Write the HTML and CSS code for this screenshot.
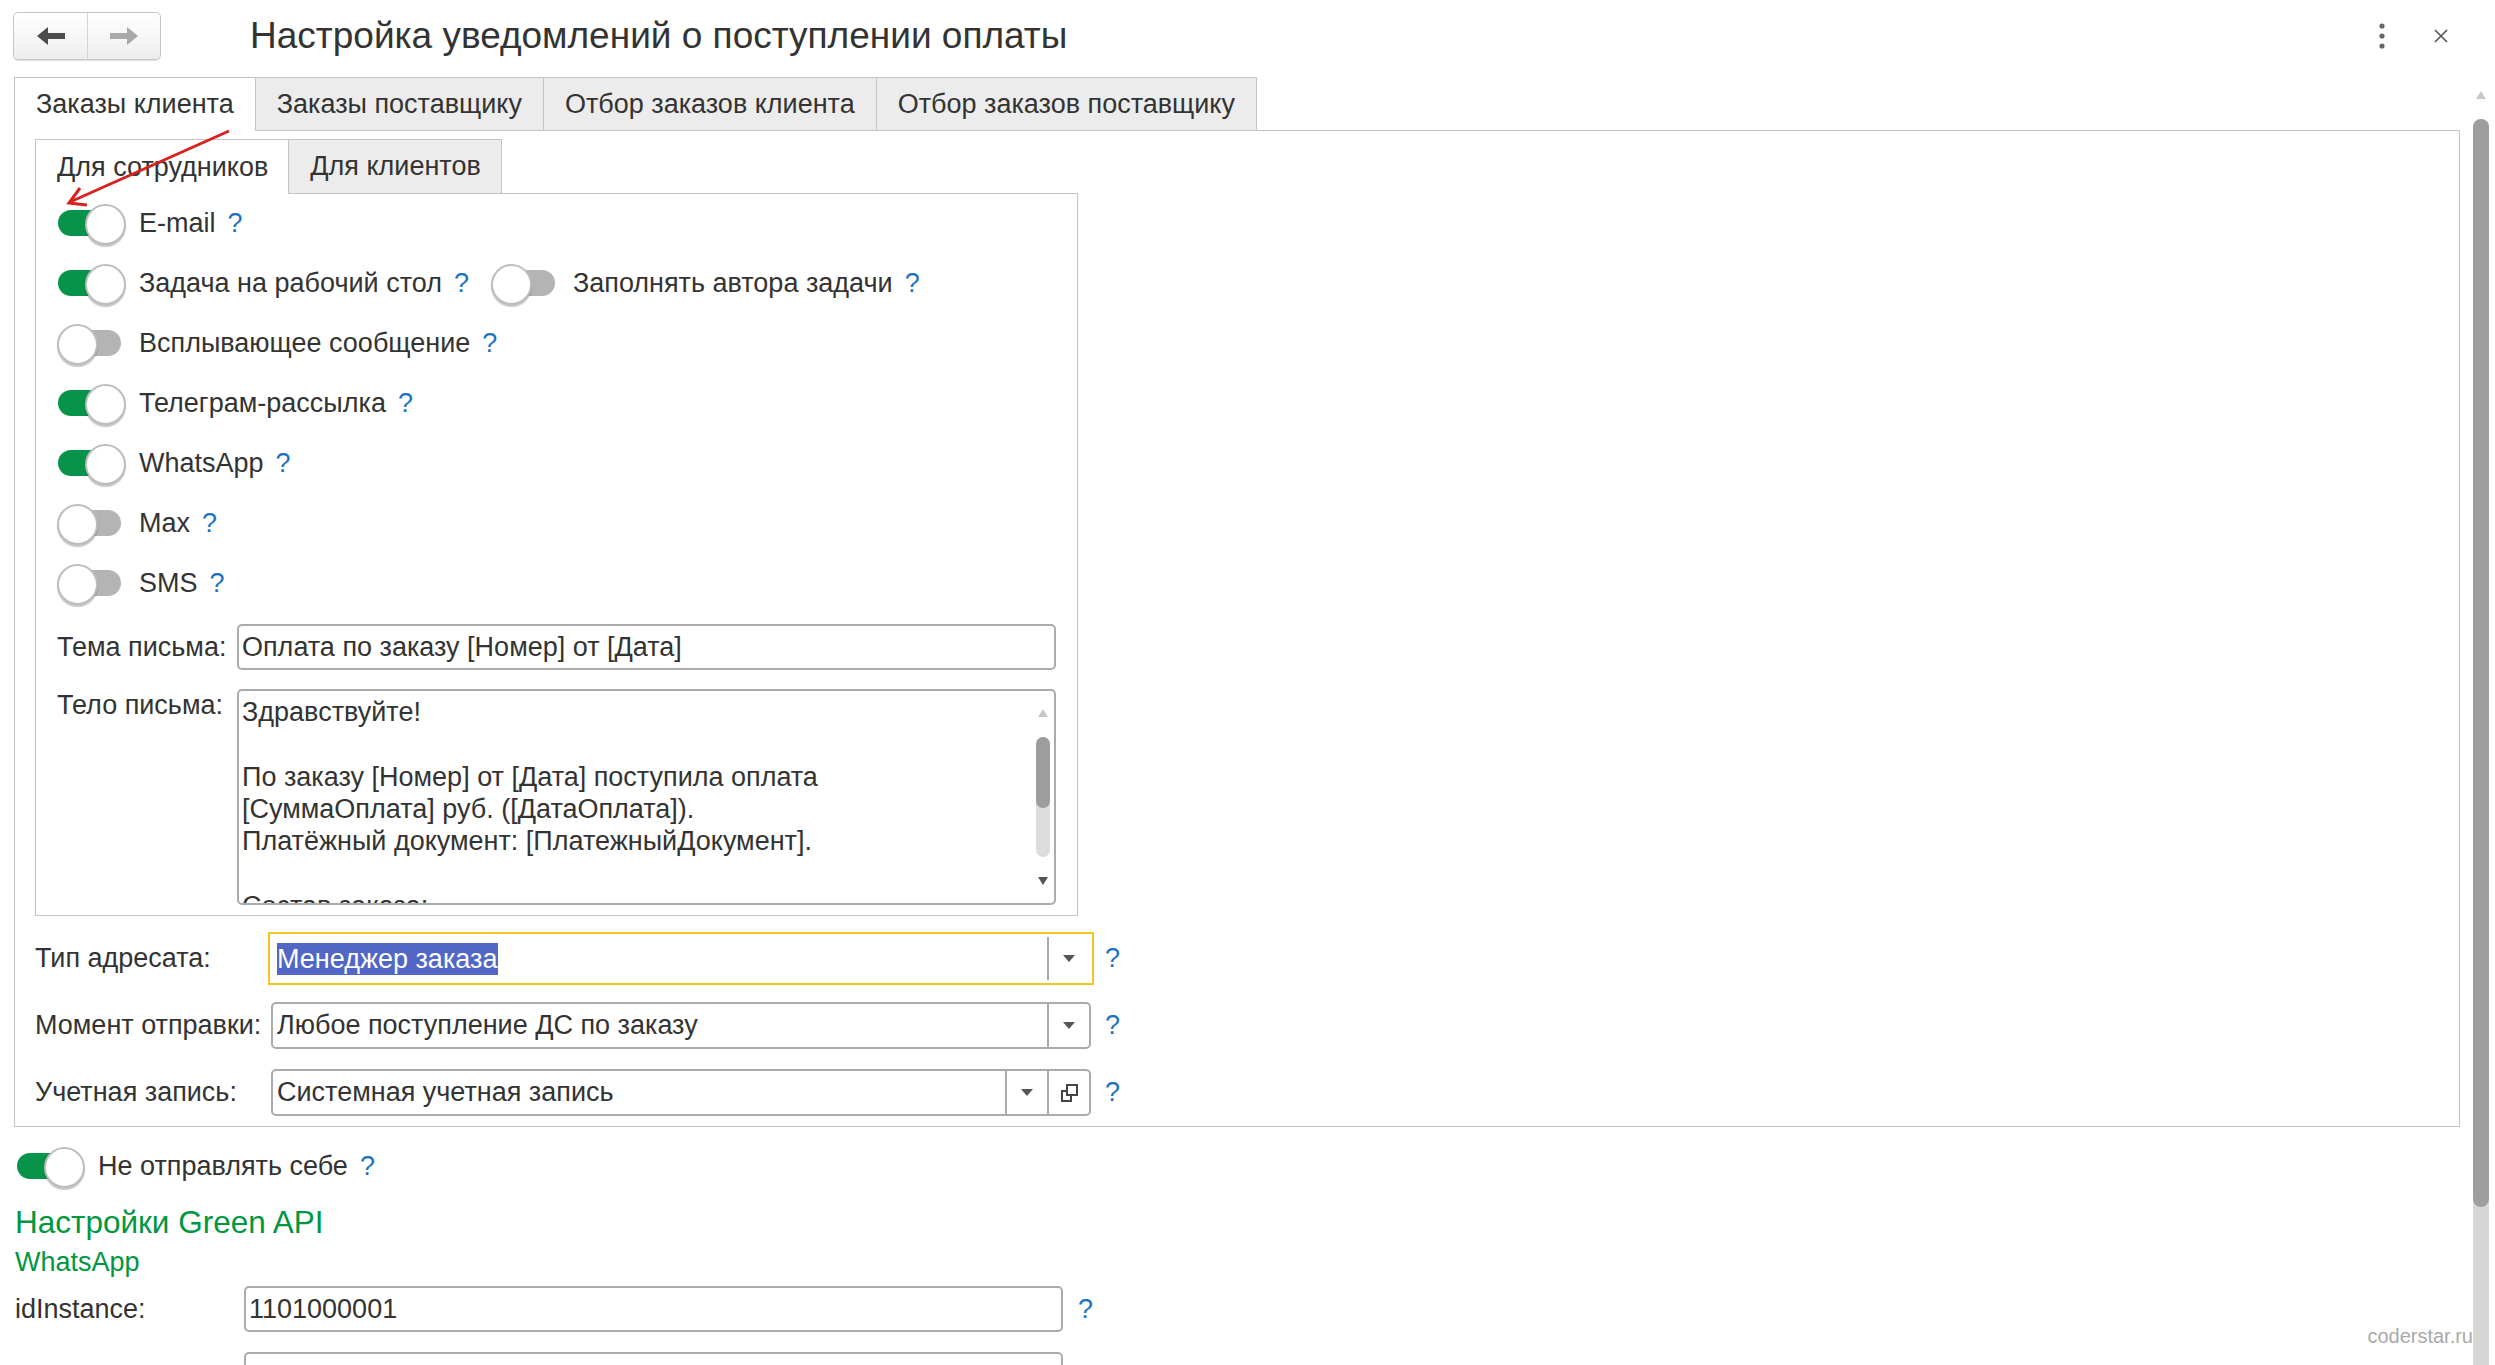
FILE: index.html
```html
<!DOCTYPE html>
<html lang="ru">
<head>
    <meta charset="UTF-8">
    <title>Настройка уведомлений о поступлении оплаты</title>
    <link rel="stylesheet" href="styles.css">
</head>
<body>

<div class="topbar">
    <div class="nav-buttons">
        <span class="nav-btn">
            <svg width="28" height="18" viewBox="0 0 28 18"><path d="M0 9 L11 0 V6 H28 V12 H11 V18 Z" fill="#4d4d4d"/></svg>
        </span>
        <span class="nav-btn">
            <svg width="28" height="18" viewBox="0 0 28 18"><path d="M28 9 L17 0 V6 H0 V12 H17 V18 Z" fill="#a9a9a9"/></svg>
        </span>
    </div>
    <h1>Настройка уведомлений о поступлении оплаты</h1>
    <div class="win-actions">
        <svg width="8" height="26" viewBox="0 0 8 26"><circle cx="4" cy="3" r="2.6" fill="#666"/><circle cx="4" cy="13" r="2.6" fill="#666"/><circle cx="4" cy="23" r="2.6" fill="#666"/></svg>
        <svg width="14" height="14" viewBox="0 0 14 14"><path d="M1 1 L13 13 M13 1 L1 13" stroke="#555" stroke-width="1.6"/></svg>
    </div>
</div>

<div class="main">
    <div class="content">
        <div class="tabs">
            <div class="tab active">Заказы клиента</div>
            <div class="tab">Заказы поставщику</div>
            <div class="tab">Отбор заказов клиента</div>
            <div class="tab">Отбор заказов поставщику</div>
        </div>
        <div class="tab-panel">
            <div class="tabs inner">
                <div class="tab active">Для сотрудников</div>
                <div class="tab">Для клиентов</div>
            </div>
            <div class="inner-panel">
                <div class="switch-list">
                    <div class="switch-row"><span class="toggle on"></span><span class="label">E-mail</span><span class="help">?</span></div>
                    <div class="switch-row">
                        <span class="toggle on"></span><span class="label">Задача на рабочий стол</span><span class="help">?</span>
                        <span class="toggle second"></span><span class="label">Заполнять автора задачи</span><span class="help">?</span>
                    </div>
                    <div class="switch-row"><span class="toggle"></span><span class="label">Всплывающее сообщение</span><span class="help">?</span></div>
                    <div class="switch-row"><span class="toggle on"></span><span class="label">Телеграм-рассылка</span><span class="help">?</span></div>
                    <div class="switch-row"><span class="toggle on"></span><span class="label">WhatsApp</span><span class="help">?</span></div>
                    <div class="switch-row"><span class="toggle"></span><span class="label">Max</span><span class="help">?</span></div>
                    <div class="switch-row"><span class="toggle"></span><span class="label">SMS</span><span class="help">?</span></div>
                </div>
                <div class="letter-grid">
                    <div class="field-label">Тема письма:</div>
                    <div class="input">Оплата по заказу [Номер] от [Дата]</div>
                    <div class="field-label top">Тело письма:</div>
                    <div class="textarea">
                        <div class="textarea-text">Здравствуйте!

По заказу [Номер] от [Дата] поступила оплата
[СуммаОплата] руб. ([ДатаОплата]).
Платёжный документ: [ПлатежныйДокумент].

Состав заказа:</div>
                        <div class="mini-scroll">
                            <span class="arrow-up"></span>
                            <div class="mini-track"><div class="mini-thumb"></div></div>
                            <span class="arrow-down"></span>
                        </div>
                    </div>
                </div>
            </div>
            <div class="field-grid">
                <div class="field-label">Тип адресата:</div>
                <div class="combo focus">
                    <div class="value"><span class="selected">Менеджер заказа</span></div>
                    <div class="btn"><span class="caret"></span></div>
                </div>
                <span class="help">?</span>

                <div class="field-label">Момент отправки:</div>
                <div class="combo">
                    <div class="value">Любое поступление ДС по заказу</div>
                    <div class="btn"><span class="caret"></span></div>
                </div>
                <span class="help">?</span>

                <div class="field-label">Учетная запись:</div>
                <div class="combo">
                    <div class="value">Системная учетная запись</div>
                    <div class="btn"><span class="caret"></span></div>
                    <div class="btn">
                        <svg width="18" height="18" viewBox="0 0 18 18"><rect x="7" y="1" width="10" height="10" fill="none" stroke="#444" stroke-width="2"/><path d="M7 7 H2 V17 H11 V11" fill="none" stroke="#444" stroke-width="2"/></svg>
                    </div>
                </div>
                <span class="help">?</span>
            </div>
        </div>

        <div class="switch-row self"><span class="toggle on"></span><span class="label">Не отправлять себе</span><span class="help">?</span></div>

        <h2 class="green-title">Настройки Green API</h2>
        <div class="green-sub">WhatsApp</div>

        <div class="field-grid api">
            <div class="field-label">idInstance:</div>
            <div class="input">1101000001</div>
            <span class="help">?</span>
            <div class="field-label"></div>
            <div class="input"></div>
            <span></span>
        </div>
    </div>

    <div class="page-scroll">
        <div class="scroll-up"><span class="arrow-up"></span></div>
        <div class="scroll-track"><div class="scroll-thumb"></div></div>
    </div>
</div>

<div class="watermark">coderstar.ru</div>

<!-- red pointer drawn over the form -->
<svg class="annotation" width="300" height="220" viewBox="0 0 300 220">
    <path d="M229 131 L70 202" stroke="#d7211f" stroke-width="3" fill="none"/>
    <path d="M80 188 L69 203 L87 205" stroke="#d7211f" stroke-width="3" fill="none"/>
</svg>

</body>
</html>
```

FILE: styles.css
```css
* {
    box-sizing: border-box;
}

body {
    margin: 0;
    height: 100vh;
    overflow: hidden;
    display: flex;
    flex-direction: column;
    font-family: "Liberation Sans", Arial, sans-serif;
    font-size: 27px;
    color: #333;
    background: #fff;
    position: relative;
}

/* Window header */
.topbar {
    display: flex;
    align-items: center;
    height: 72px;
    flex: none;
    padding: 0 47px 0 13px;
}

.nav-buttons {
    display: flex;
    height: 48px;
    border: 1px solid #c6c6c6;
    border-radius: 5px;
    background: linear-gradient(#fff, #eeeeee);
    box-shadow: 0 1px 1px rgba(0, 0, 0, 0.12);
}

.nav-btn {
    width: 73px;
    display: flex;
    align-items: center;
    justify-content: center;
}

.nav-btn + .nav-btn {
    border-left: 1px solid #d4d4d4;
}

.topbar h1 {
    margin: 0 0 0 89px;
    font-size: 37px;
    font-weight: normal;
    color: #333;
}

.win-actions {
    margin-left: auto;
    display: flex;
    align-items: center;
    gap: 48px;
}

/* Page body */
.main {
    flex: 1;
    min-height: 0;
    display: flex;
    margin-top: 5px;
}

.content {
    flex: 1;
    min-width: 0;
    padding-left: 14px;
    overflow: hidden;
}

/* Tabs */
.tabs {
    display: flex;
    height: 53px;
}

.tab {
    height: 53px;
    padding: 0 21px 0 21px;
    display: flex;
    align-items: center;
    background: #ececec;
    border: 1px solid #c4c4c4;
    border-bottom: none;
    margin-right: -1px;
    white-space: nowrap;
}

.tab.active {
    background: #fff;
    height: 54px;
    position: relative;
    z-index: 1;
}

.tabs.inner,
.tabs.inner .tab {
    height: 54px;
}

.tabs.inner .tab {
    padding: 0 20px 0 21px;
}

.tabs.inner .tab.active {
    height: 55px;
}

.tab-panel {
    border: 1px solid #c4c4c4;
    padding: 8px 0 10px 20px;
}

.inner-panel {
    width: 1043px;
    border: 1px solid #c4c4c4;
    padding: 10px 21px;
}

/* Switches */
.switch-list {
    display: flex;
    flex-direction: column;
    gap: 22px;
}

.switch-row {
    display: flex;
    align-items: center;
    height: 38px;
    white-space: nowrap;
}

.toggle {
    position: relative;
    width: 69px;
    height: 38px;
    flex: none;
}

.toggle::before {
    content: "";
    position: absolute;
    left: 1px;
    right: 5px;
    top: 6px;
    height: 26px;
    border-radius: 13px;
    background: #b4b4b4;
}

.toggle.on::before {
    background: #07944a;
}

.toggle::after {
    content: "";
    position: absolute;
    top: 0;
    left: 0;
    width: 37px;
    height: 37px;
    border-radius: 50%;
    background: #fff;
    border: 2px solid #bdbdbd;
    box-shadow: 0 2px 1px rgba(0, 0, 0, 0.22);
}

.toggle.on::after {
    left: auto;
    right: 0;
}

.toggle.second {
    margin-left: 22px;
}

.label {
    margin-left: 13px;
}

.help {
    color: #1b72c4;
    margin-left: 12px;
}

/* Letter fields */
.letter-grid {
    display: grid;
    grid-template-columns: 180px 1fr;
    row-gap: 19px;
    margin-top: 22px;
}

.field-label {
    display: flex;
    align-items: center;
    white-space: nowrap;
}

.field-label.top {
    align-items: flex-start;
    line-height: 32px;
}

.input {
    height: 46px;
    border: 2px solid #ababab;
    border-radius: 5px;
    padding: 0 3px;
    display: flex;
    align-items: center;
    white-space: nowrap;
}

.textarea {
    height: 216px;
    border: 2px solid #ababab;
    border-radius: 5px;
    display: flex;
    overflow: hidden;
}

.textarea-text {
    flex: 1;
    padding: 5px 3px 0;
    line-height: 32.3px;
    white-space: pre-line;
    overflow: hidden;
}

.mini-scroll {
    width: 14px;
    margin-right: 4px;
    padding-top: 12px;
    display: flex;
    flex-direction: column;
    align-items: center;
}

.arrow-up,
.arrow-down {
    width: 0;
    height: 0;
    border-left: 5px solid transparent;
    border-right: 5px solid transparent;
    margin: 6px 0;
}

.arrow-up {
    border-bottom: 8px solid #c8c8c8;
}

.arrow-down {
    border-top: 8px solid #555;
}

.mini-track {
    width: 14px;
    height: 120px;
    margin: 14px 0;
    border-radius: 7px;
    background: #dcdcdc;
}

.mini-thumb {
    height: 71px;
    border-radius: 7px;
    background: #9d9d9d;
}

/* Combo fields */
.field-grid {
    display: grid;
    grid-template-columns: 236px 820px auto;
    grid-auto-rows: 47px;
    row-gap: 20px;
    margin-top: 19px;
}

.field-grid .help {
    margin-left: 14px;
    display: flex;
    align-items: center;
}

.combo {
    display: flex;
    border: 2px solid #ababab;
    border-radius: 5px;
}

.combo.focus {
    border-color: transparent;
    border-radius: 0;
    outline: 2px solid #f5c623;
    outline-offset: 1px;
}

.combo .value {
    flex: 1;
    display: flex;
    align-items: center;
    padding-left: 4px;
    white-space: nowrap;
}

.selected {
    background: #5166c5;
    color: #fff;
    line-height: 32px;
    padding-right: 1px;
}

.combo .btn {
    width: 42px;
    border-left: 2px solid #ababab;
    display: flex;
    align-items: center;
    justify-content: center;
}

.caret {
    width: 0;
    height: 0;
    border-left: 6px solid transparent;
    border-right: 6px solid transparent;
    border-top: 7px solid #555;
}

/* Below the tabs */
.switch-row.self {
    margin-top: 20px;
    padding-left: 2px;
}

.green-title {
    margin: 19px 0 0 1px;
    font-size: 31.5px;
    line-height: 36px;
    font-weight: normal;
    color: #00973f;
}

.green-sub {
    margin: 6px 0 0 1px;
    line-height: 32px;
    color: #00973f;
}

.field-grid.api {
    grid-template-columns: 230px 819px auto;
    row-gap: 19px;
    margin-top: 8px;
}

.field-grid.api .field-label {
    padding-left: 1px;
}

.field-grid.api .help {
    margin-left: 15px;
}

/* Page scrollbar */
.page-scroll {
    width: 16px;
    margin: 0 6px 0 13px;
    display: flex;
    flex-direction: column;
    flex: none;
}

.scroll-up {
    height: 36px;
    display: flex;
    align-items: center;
    justify-content: center;
    margin-bottom: 6px;
}

.scroll-track {
    flex: 1;
    background: #d6d6d6;
    border-radius: 8px 8px 0 0;
}

.scroll-thumb {
    height: 1088px;
    border-radius: 8px;
    background: #9e9e9e;
}

/* Overlays */
.watermark {
    position: absolute;
    right: 22px;
    bottom: 17px;
    font-size: 20px;
    color: #a9a9a9;
}

.annotation {
    position: absolute;
    left: 0;
    top: 0;
    z-index: 5;
    pointer-events: none;
}
```
